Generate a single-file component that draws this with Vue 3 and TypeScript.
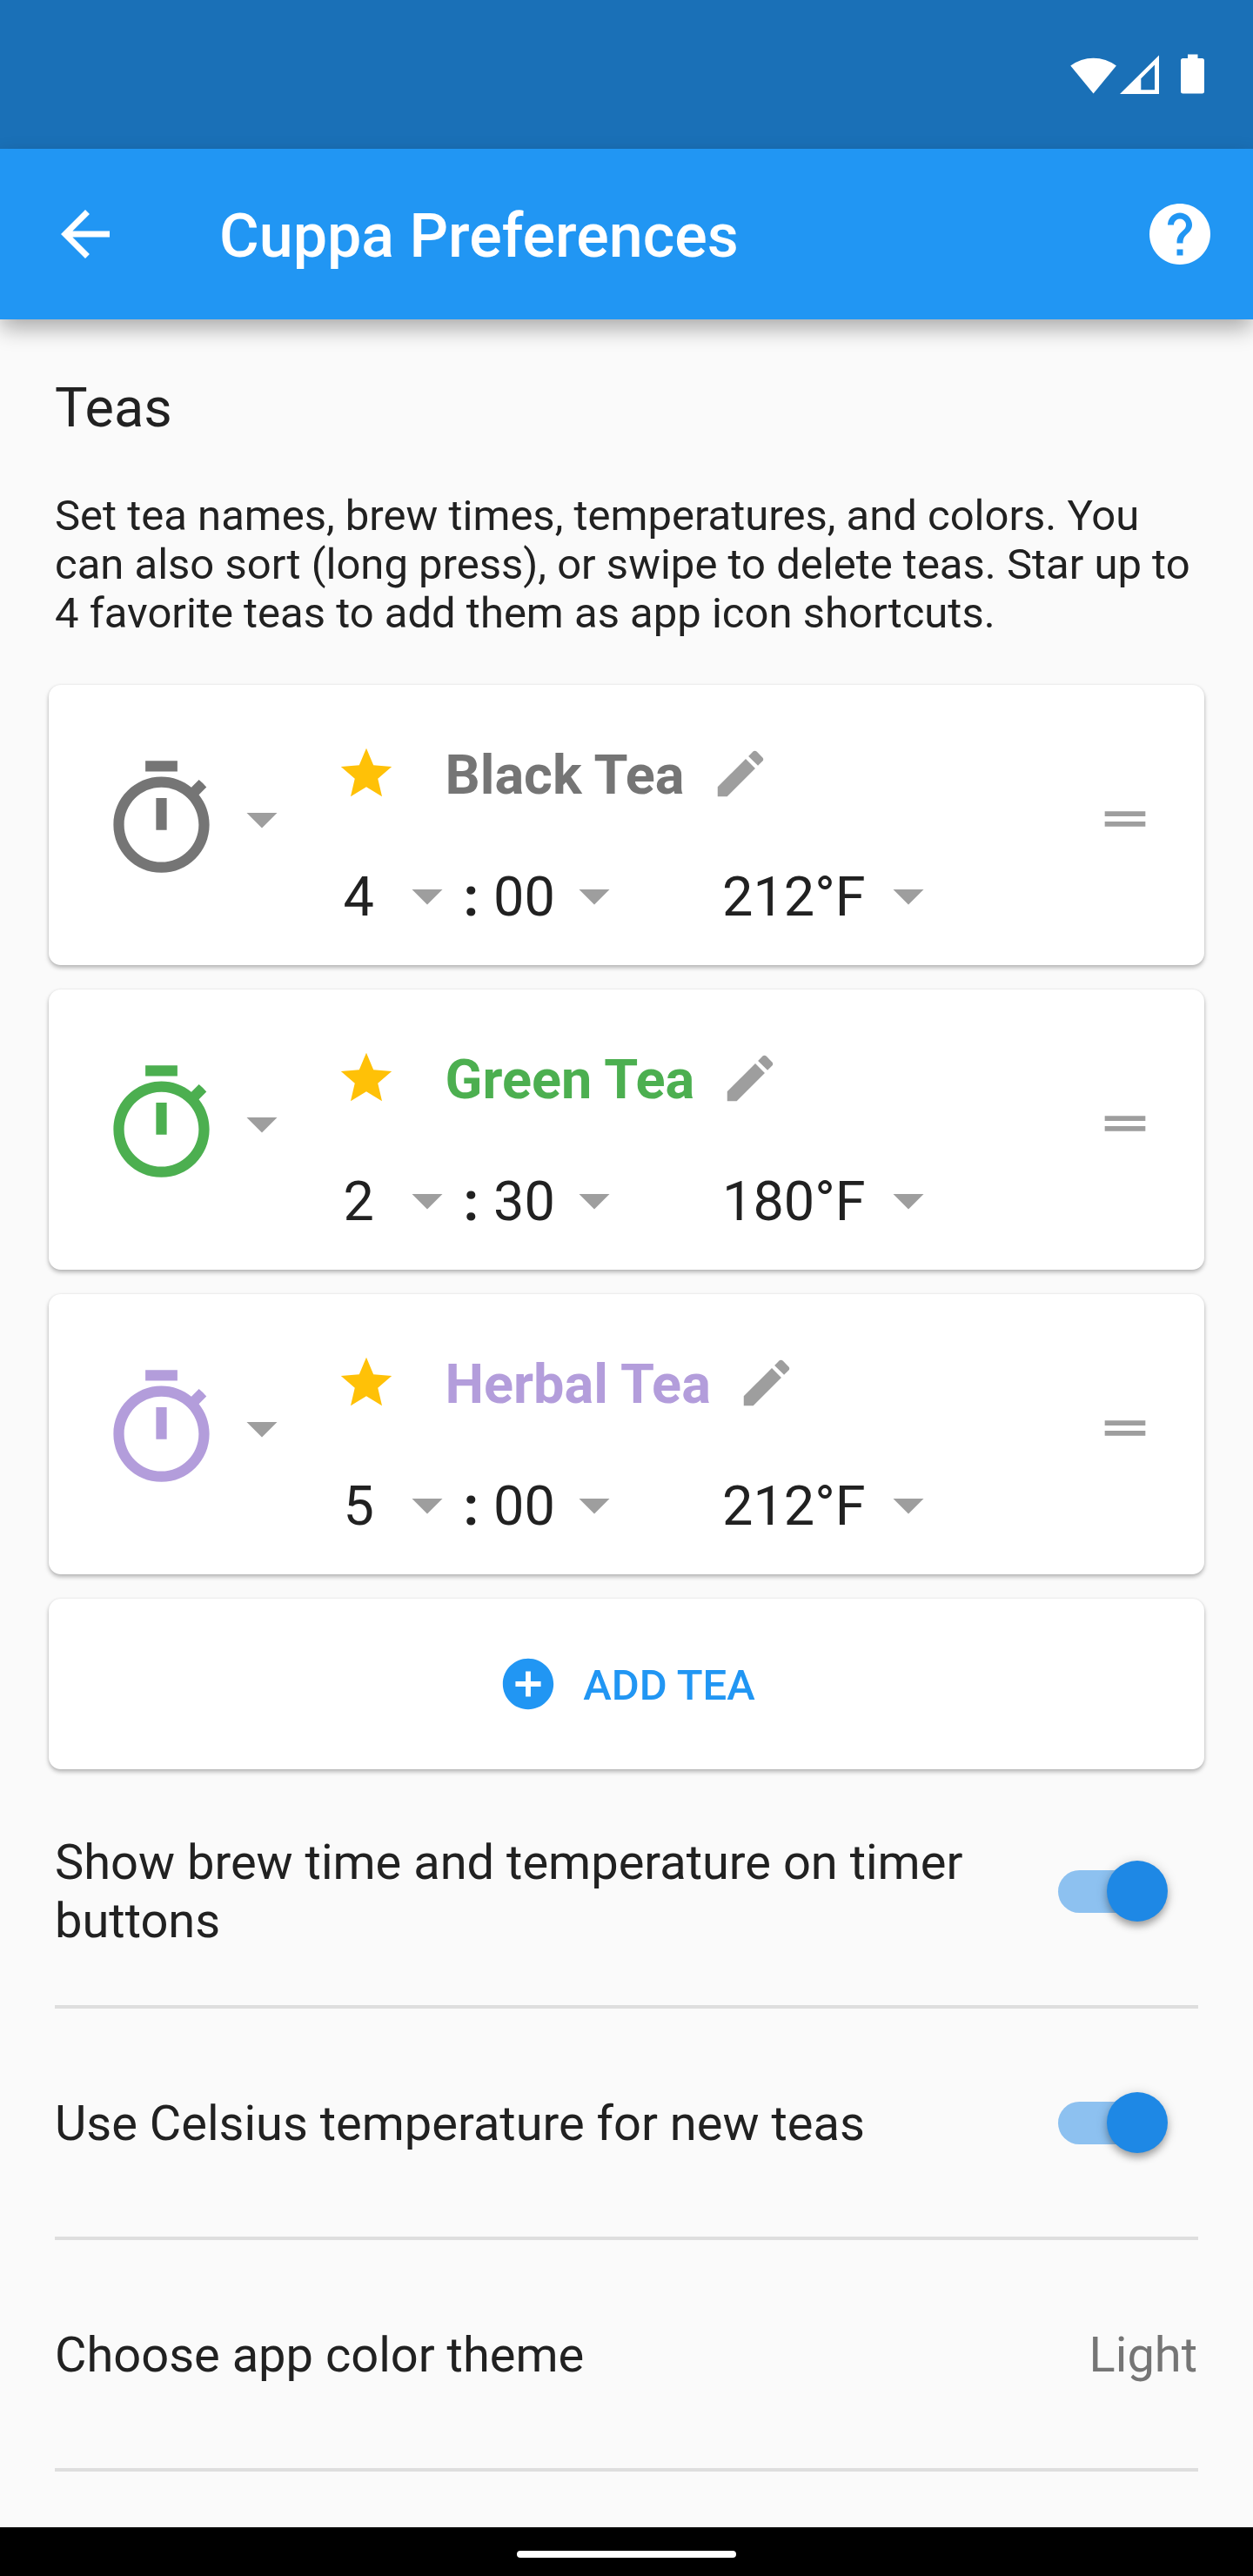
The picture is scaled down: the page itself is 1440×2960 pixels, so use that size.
<script setup lang="ts">
import { ref } from 'vue'

interface Tea {
  name: string
  color: string
  minutes: string
  seconds: string
  temp: string
}

const teas = ref<Tea[]>([
  { name: 'Black Tea', color: '#757575', minutes: '4', seconds: '00', temp: '212°F' },
  { name: 'Green Tea', color: '#4caf50', minutes: '2', seconds: '30', temp: '180°F' },
  { name: 'Herbal Tea', color: '#b39ddb', minutes: '5', seconds: '00', temp: '212°F' },
])

const toggles = ref([
  { label: 'Show brew time and temperature on timer buttons', on: true },
  { label: 'Use Celsius temperature for new teas', on: true },
])

const caret = 'M7 10l5 5 5-5z'
</script>

<template>
  <div class="screen">
    <div class="status-bar">
      <svg class="wifi" viewBox="0 0 54 45"><path d="M0.3 12.6A43.5 43.5 0 0 1 52.9 12.6L26.6 44.6z" /></svg>
      <svg class="signal" viewBox="0 0 45 45">
        <path fill-rule="evenodd" d="M0 45L45 0.5V45zM24.3 27.2V40.2H40V11.6z" />
      </svg>
      <svg class="battery" viewBox="0 0 27 46">
        <path d="M8 0.4h11.5V5H24.5a2.5 2.5 0 0 1 2.5 2.5V43a2.5 2.5 0 0 1-2.5 2.5H2.5A2.5 2.5 0 0 1 0 43V7.5A2.5 2.5 0 0 1 2.5 5H8z" />
      </svg>
    </div>

    <header class="app-bar">
      <svg class="icon-lg" viewBox="0 0 24 24">
        <path d="M20 11H7.83l5.59-5.59L12 4l-8 8 8 8 1.41-1.41L7.83 13H20v-2z" />
      </svg>
      <h1>Cuppa Preferences</h1>
      <svg class="icon-lg" viewBox="0 0 24 24">
        <path
          d="M12 2C6.48 2 2 6.48 2 12s4.48 10 10 10 10-4.48 10-10S17.52 2 12 2zm1 17h-2v-2h2v2zm2.07-7.75l-.9.92C13.45 12.9 13 13.5 13 15h-2v-.5c0-1.1.45-2.1 1.17-2.83l1.24-1.26c.37-.36.59-.86.59-1.41 0-1.1-.9-2-2-2s-2 .9-2 2H8c0-2.21 1.79-4 4-4s4 1.79 4 4c0 .88-.36 1.68-.93 2.25z"
        />
      </svg>
    </header>

    <main class="body">
      <h2>Teas</h2>
      <p class="intro">
        Set tea names, brew times, temperatures, and colors. You can also sort (long press), or
        swipe to delete teas. Star up to 4 favorite teas to add them as app icon shortcuts.
      </p>

      <div class="cards">
        <section v-for="tea in teas" :key="tea.name" class="card tea" :style="{ '--tea': tea.color }">
          <svg class="timer" viewBox="0 0 24 24">
            <path
              d="M15 1H9v2h6V1zm-4 13h2V8h-2v6zm8.03-6.61l1.42-1.42c-.43-.51-.9-.99-1.41-1.41l-1.42 1.42C16.07 4.74 14.12 4 12 4c-4.97 0-9 4.03-9 9s4.02 9 9 9 9-4.03 9-9c0-2.12-.74-4.07-1.97-5.61zM12 20c-3.87 0-7-3.13-7-7s3.13-7 7-7 7 3.13 7 7-3.13 7-7 7z"
            />
          </svg>
          <svg class="icon-lg caret color-caret" viewBox="0 0 24 24"><path :d="caret" /></svg>

          <div class="details">
            <div class="name-row">
              <svg class="icon-md star" viewBox="0 0 24 24">
                <path d="M12 17.27L18.18 21l-1.64-7.03L22 9.24l-7.19-.61L12 2 9.19 8.63 2 9.24l5.46 4.73L5.82 21z" />
              </svg>
              <span class="name">{{ tea.name }}</span>
              <svg class="icon-md grey" viewBox="0 0 24 24">
                <path
                  d="M3 17.25V21h3.75L17.81 9.94l-3.75-3.75L3 17.25zM20.71 7.04c.39-.39.39-1.02 0-1.41l-2.34-2.34c-.39-.39-1.02-.39-1.41 0l-1.83 1.83 3.75 3.75 1.83-1.83z"
                />
              </svg>
            </div>
            <div class="time-row">
              <span class="value minutes">{{ tea.minutes }}</span>
              <svg class="icon-lg caret" viewBox="0 0 24 24"><path :d="caret" /></svg>
              <span class="value colon">:</span>
              <span class="value seconds">{{ tea.seconds }}</span>
              <svg class="icon-lg caret" viewBox="0 0 24 24"><path :d="caret" /></svg>
              <span class="value temp">{{ tea.temp }}</span>
              <svg class="icon-lg caret" viewBox="0 0 24 24"><path :d="caret" /></svg>
            </div>
          </div>

          <svg class="icon-md grey handle" viewBox="0 0 24 24">
            <path d="M20 9H4v2h16V9zM4 15h16v-2H4v2z" />
          </svg>
        </section>

        <button class="card add" type="button">
          <svg class="icon-md" viewBox="0 0 24 24">
            <path d="M12 2C6.48 2 2 6.48 2 12s4.48 10 10 10 10-4.48 10-10S17.52 2 12 2zm5 11h-4v4h-2v-4H7v-2h4V7h2v4h4v2z" />
          </svg>
          <span>ADD TEA</span>
        </button>
      </div>

      <div class="settings">
        <div v-for="item in toggles" :key="item.label" class="setting">
          <span class="label">{{ item.label }}</span>
          <span class="switch" :class="{ on: item.on }" @click="item.on = !item.on">
            <span class="thumb"></span>
          </span>
        </div>
        <div class="setting">
          <span class="label">Choose app color theme</span>
          <span class="choice">Light</span>
        </div>
      </div>
    </main>

    <div class="nav-bar"><span class="pill"></span></div>
  </div>
</template>

<style>
body {
  margin: 0;
  background: #fafafa;
}
</style>

<style scoped>
.screen {
  display: flex;
  flex-direction: column;
  box-sizing: border-box;
  width: 1440px;
  height: 2960px;
  overflow: hidden;
  background: #fafafa;
  color: #212121;
  font-family: Roboto, sans-serif;
}

svg {
  display: block;
  flex: none;
  fill: currentColor;
}

.status-bar {
  display: flex;
  flex: none;
  box-sizing: border-box;
  height: 171px;
  padding: 62px 56px 0 0;
  justify-content: flex-end;
  background: #1a70b7;
  color: #fff;
}
.wifi {
  width: 54px;
  height: 45px;
  margin: 1px 3px 0 0;
}
.signal {
  width: 45px;
  height: 45px;
  margin: 1px 25px 0 0;
}
.battery {
  width: 27px;
  height: 46px;
}

.app-bar {
  position: relative;
  display: flex;
  flex: none;
  align-items: center;
  box-sizing: border-box;
  height: 196px;
  padding: 0 42px 0 56px;
  background: #2196f3;
  color: #fff;
  box-shadow: 0 11px 24px -1px rgba(0, 0, 0, 0.33);
}
.app-bar h1 {
  flex: 1;
  margin: 4px 0 0 112px;
  font-size: 70px;
  font-weight: 500;
  line-height: 82px;
}

.icon-lg {
  width: 84px;
  height: 84px;
}
.icon-md {
  width: 70px;
  height: 70px;
}
.grey,
.caret {
  color: #9e9e9e;
}

.body {
  flex: 1;
  min-height: 0;
}
h2 {
  margin: 65px 63px 0;
  font-size: 63px;
  font-weight: 400;
  line-height: 73px;
}
.intro {
  margin: 60px 63px 0;
  font-size: 49px;
  line-height: 56px;
}

.cards {
  display: flex;
  flex-direction: column;
  gap: 28px;
  margin: 54px 56px 0;
}
.card {
  box-sizing: border-box;
  border-radius: 14px;
  background: #fff;
  box-shadow:
    0 3px 5px rgba(0, 0, 0, 0.27),
    0 0 3px rgba(0, 0, 0, 0.08);
}
.tea {
  display: flex;
  height: 322px;
  padding-left: 56px;
}
.timer {
  width: 147px;
  height: 147px;
  margin-top: 81px;
  color: var(--tea);
}
.color-caret {
  margin-top: 112px;
}
.details {
  flex: 1;
  padding: 67px 0 0 42.5px;
}
.name-row {
  display: flex;
  height: 70px;
}
.star {
  color: #ffc107;
}
.name {
  margin: 0 29px 0 56px;
  color: var(--tea);
  font-size: 63px;
  font-weight: 700;
  line-height: 73px;
  white-space: nowrap;
}
.time-row {
  display: flex;
  height: 84px;
  margin: 63px 0 0 9px;
}
.value {
  flex: none;
  padding-top: 7px;
  font-size: 63px;
  line-height: 73px;
  white-space: nowrap;
}
.minutes {
  width: 54px;
}
.colon {
  width: 34.5px;
  font-weight: 700;
}
.seconds {
  width: 73.5px;
}
.temp {
  width: 171.5px;
  margin-left: 105.5px;
}
.handle {
  margin: 119px 56px 0 0;
}

.add {
  display: flex;
  align-items: center;
  justify-content: center;
  gap: 28px;
  height: 196px;
  padding: 0;
  border: 0;
  color: #2196f3;
  font: 500 49px/57px Roboto, sans-serif;
}
.add span {
  margin-top: 3px;
}

.settings {
  margin: 9px 63px 0;
}
.setting {
  display: flex;
  align-items: center;
  justify-content: space-between;
  box-sizing: border-box;
  height: 266px;
  border-bottom: 4px solid #dedede;
}
.label,
.choice {
  margin-top: 2px;
  font-size: 56px;
  line-height: 67px;
}
.label {
  max-width: 1100px;
}
.choice {
  margin-right: 1px;
  color: #757575;
}
.switch {
  display: flex;
  flex: none;
  align-items: center;
  width: 115.5px;
  height: 49px;
  margin-right: 45.5px;
  border-radius: 24.5px;
  background: #9e9e9e;
}
.switch.on {
  background: #8dc1f0;
}
.thumb {
  flex: none;
  width: 70px;
  height: 70px;
  margin-left: -10px;
  border-radius: 50%;
  background: #fff;
  box-shadow:
    0 6px 8px -1px rgba(0, 0, 0, 0.28),
    0 2px 14px rgba(0, 0, 0, 0.18);
}
.on .thumb {
  margin-left: 56px;
  background: #1e88e5;
}

.nav-bar {
  display: flex;
  flex: none;
  align-items: center;
  justify-content: center;
  box-sizing: border-box;
  height: 56px;
  background: #000;
}
.pill {
  width: 252px;
  height: 8px;
  margin-top: 6px;
  border-radius: 4px;
  background: #fff;
}
</style>
